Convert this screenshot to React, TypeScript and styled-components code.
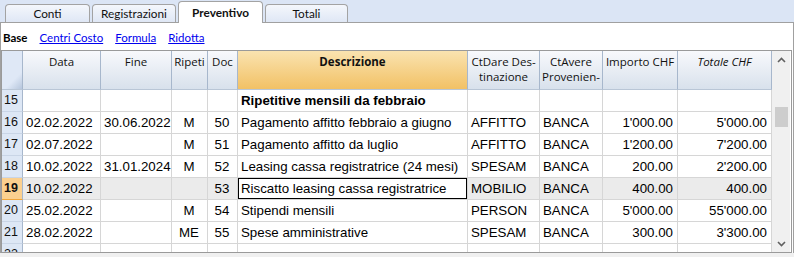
import React from 'react';
import styled, { createGlobalStyle, css } from 'styled-components';

const GlobalStyle = createGlobalStyle`
  html, body {
    margin: 0;
    padding: 0;
    background: #f0f0f0;
  }
  body {
    width: 794px;
    height: 257px;
    overflow: hidden;
    font-family: 'Open Sans', 'Liberation Sans', sans-serif;
  }
`;

const Page = styled.div`
  width: 794px;
  height: 257px;
  display: flex;
  flex-direction: column;
`;

const TabStrip = styled.div`
  height: 22px;
  background: #dbe5f5;
  display: flex;
  align-items: flex-end;
  gap: 2px;
  padding-left: 5px;
  position: relative;
  z-index: 1;
`;

const Tab = styled.div<{ $active?: boolean; $w: number }>`
  width: ${p => p.$w}px;
  height: 18px;
  box-sizing: border-box;
  border: 1px solid #a3a3a3;
  border-bottom: none;
  border-radius: 4px 4px 0 0;
  background: linear-gradient(#f4f7fc, #dfe7f5);
  display: flex;
  align-items: center;
  justify-content: center;
  font-family: Lato, 'Open Sans', sans-serif;
  font-size: 11.8px;
  color: #111;
  ${p => p.$active && css`
    height: 22px;
    margin-bottom: -1px;
    background: #fff;
    font-weight: 700;
    padding-bottom: 1px;
  `}
`;

const Panel = styled.div`
  background: #fff;
  border: 1px solid #a0a0a0;
  border-bottom: none;
  width: 794px;
  box-sizing: border-box;
  padding-right: 1px;
  height: 231px;
`;

const SubTabs = styled.div`
  height: 27px;
  display: flex;
  align-items: center;
  gap: 12px;
  padding-left: 2px;
  font-family: Lato, 'Open Sans', sans-serif;
  font-size: 11.5px;
  padding-top: 1px;
  box-sizing: border-box;
`;

const SubTab = styled.span<{ $current?: boolean }>`
  color: ${p => (p.$current ? '#000' : '#0000ee')};
  font-weight: ${p => (p.$current ? 700 : 400)};
  text-decoration: ${p => (p.$current ? 'none' : 'underline')};
`;

const Frame = styled.div`
  display: flex;
  border: 1px solid #9a9a9a;
  height: 203px;
  box-sizing: border-box;
`;

const TableArea = styled.div`
  width: 770px;
  overflow: hidden;
`;

const cols = '21px 78px 71px 36px 30px 230px 72px 63px 75px 94px';

const HeaderRow = styled.div`
  display: grid;
  grid-template-columns: ${cols};
  height: 39px;
`;

const HeadCell = styled.div<{ $accent?: boolean; $bold?: boolean; $italic?: boolean }>`
  box-sizing: border-box;
  border-right: 1px solid #a7b7cc;
  border-bottom: 1px solid #b9c6d6;
  background: ${p => (p.$accent ? 'linear-gradient(#fae3b0, #f2c165)' : 'linear-gradient(#f8f9fc, #d8e1ec)')};
  font-size: 11.5px;
  line-height: 15px;
  text-align: center;
  padding-top: 3px;
  font-weight: ${p => (p.$bold ? 700 : 400)};
  font-style: ${p => (p.$italic ? 'italic' : 'normal')};
  color: #111;
  white-space: nowrap;
  overflow: hidden;
`;

const Corner = styled.div`
  box-sizing: border-box;
  border-right: 1px solid #a7b7cc;
  border-bottom: 1px solid #b9c6d6;
  background: linear-gradient(135deg, #dfe8f6 70%, #b6c6dc 100%);
`;

const Row = styled.div<{ $selected?: boolean }>`
  display: grid;
  grid-template-columns: ${cols};
  height: 22px;
  background: ${p => (p.$selected ? '#ebebeb' : '#fff')};
`;

const NumCell = styled.div<{ $selected?: boolean }>`
  box-sizing: border-box;
  background: ${p => (p.$selected ? '#fbd08f' : '#dde7f5')};
  border-right: 1px solid #a7b7cc;
  border-bottom: 1px solid ${p => (p.$selected ? '#f0a53a' : '#c9d5e6')};
  font-family: 'Liberation Sans', Arial, sans-serif;
  font-size: 12.5px;
  font-weight: ${p => (p.$selected ? 700 : 400)};
  padding-left: 2px;
  line-height: 21px;
  color: #111;
`;

type Align = 'left' | 'center' | 'right';

const Cell = styled.div<{ $align: Align; $bold?: boolean; $current?: boolean }>`
  box-sizing: border-box;
  border-right: 1px solid #d6d6d6;
  border-bottom: 1px solid #d6d6d6;
  font-family: 'Liberation Sans', Arial, sans-serif;
  font-size: 13.3px;
  font-weight: ${p => (p.$bold ? 700 : 400)};
  line-height: 21px;
  text-align: ${p => p.$align};
  padding: 0 4px 0 3px;
  white-space: nowrap;
  overflow: ${p => (p.$bold ? 'visible' : 'hidden')};
  color: #000;
  ${p => p.$current && css`
    background: #fff;
    box-shadow: inset 0 0 0 1px #000;
  `}
`;

const Scrollbar = styled.div`
  width: 18px;
  background: #f0f0f0;
  display: flex;
  flex-direction: column;
  align-items: center;
`;

const Arrow = styled.div`
  height: 17px;
  display: flex;
  align-items: center;
  justify-content: center;
`;

const Track = styled.div`
  flex: 1;
  width: 100%;
  display: flex;
  flex-direction: column;
  align-items: center;
  padding-top: 39px;
`;

const Thumb = styled.div`
  width: 13px;
  height: 20px;
  background: #cdcdcd;
`;

const aligns: Align[] = ['left', 'left', 'center', 'center', 'left', 'left', 'left', 'right', 'right'];

const headers = [
  { label: 'Data' },
  { label: 'Fine' },
  { label: 'Ripeti' },
  { label: 'Doc' },
  { label: 'Descrizione', bold: true, accent: true },
  { label: 'CtDare Des-', second: 'tinazione' },
  { label: 'CtAvere', second: 'Provenien-' },
  { label: 'Importo CHF' },
  { label: 'Totale CHF', italic: true },
];

const rows: { n: number; cells: string[]; heading?: boolean; selected?: boolean }[] = [
  { n: 15, cells: ['', '', '', '', 'Ripetitive mensili da febbraio', '', '', '', ''], heading: true },
  { n: 16, cells: ['02.02.2022', '30.06.2022', 'M', '50', 'Pagamento affitto febbraio a giugno', 'AFFITTO', 'BANCA', "1'000.00", "5'000.00"] },
  { n: 17, cells: ['02.07.2022', '', 'M', '51', 'Pagamento affitto da luglio', 'AFFITTO', 'BANCA', "1'200.00", "7'200.00"] },
  { n: 18, cells: ['10.02.2022', '31.01.2024', 'M', '52', 'Leasing cassa registratrice (24 mesi)', 'SPESAM', 'BANCA', '200.00', "2'200.00"] },
  { n: 19, cells: ['10.02.2022', '', '', '53', 'Riscatto leasing cassa registratrice', 'MOBILIO', 'BANCA', '400.00', '400.00'], selected: true },
  { n: 20, cells: ['25.02.2022', '', 'M', '54', 'Stipendi mensili', 'PERSON', 'BANCA', "5'000.00", "55'000.00"] },
  { n: 21, cells: ['28.02.2022', '', 'ME', '55', 'Spese amministrative', 'SPESAM', 'BANCA', '300.00', "3'300.00"] },
  { n: 22, cells: ['', '', '', '', '', '', '', '', ''] },
];

const Chevron: React.FC<{ down?: boolean }> = ({ down }) => (
  <svg width="9" height="6" viewBox="0 0 9 6">
    <polyline
      points={down ? '1,1 4.5,4.5 8,1' : '1,5 4.5,1.5 8,5'}
      fill="none"
      stroke="#606060"
      strokeWidth="1.6"
    />
  </svg>
);

export default function App() {
  return (
    <Page>
      <GlobalStyle />
      <TabStrip>
        <Tab $w={85}>Conti</Tab>
        <Tab $w={84}>Registrazioni</Tab>
        <Tab $w={85} $active>Preventivo</Tab>
        <Tab $w={83}>Totali</Tab>
      </TabStrip>
      <Panel>
        <SubTabs>
          <SubTab $current>Base</SubTab>
          <SubTab>Centri Costo</SubTab>
          <SubTab>Formula</SubTab>
          <SubTab>Ridotta</SubTab>
        </SubTabs>
        <Frame>
          <TableArea>
            <HeaderRow>
              <Corner />
              {headers.map(h => (
                <HeadCell key={h.label} $accent={h.accent} $bold={h.bold} $italic={h.italic}>
                  {h.label}
                  {h.second && <br />}
                  {h.second}
                </HeadCell>
              ))}
            </HeaderRow>
            {rows.map(r => (
              <Row key={r.n} $selected={r.selected}>
                <NumCell $selected={r.selected}>{r.n}</NumCell>
                {r.cells.map((c, i) => (
                  <Cell
                    key={i}
                    $align={aligns[i]}
                    $bold={r.heading && i === 4}
                    $current={r.selected && i === 4}
                  >
                    {c}
                  </Cell>
                ))}
              </Row>
            ))}
          </TableArea>
          <Scrollbar>
            <Arrow><Chevron /></Arrow>
            <Track><Thumb /></Track>
            <Arrow><Chevron down /></Arrow>
          </Scrollbar>
        </Frame>
      </Panel>
    </Page>
  );
}
